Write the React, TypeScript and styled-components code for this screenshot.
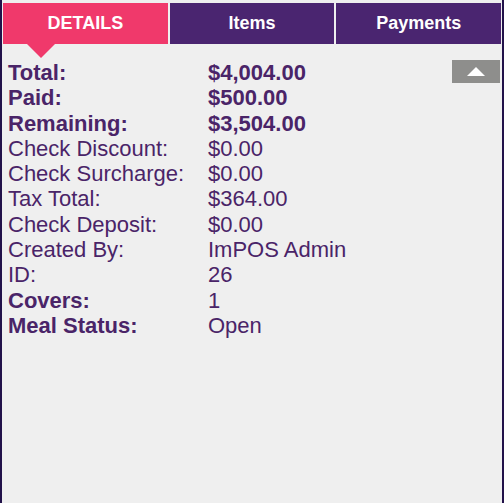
import React from "react";
import styled, { createGlobalStyle } from "styled-components";

const GlobalStyle = createGlobalStyle`
  html, body {
    margin: 0;
    padding: 0;
    background: #efefef;
  }
`;

const Panel = styled.div`
  box-sizing: border-box;
  width: 504px;
  height: 503px;
  background: #efefef;
  border-left: 2px solid #22124a;
  border-right: 2px solid #22124a;
  padding: 3px 1px 0 1px;
  font-family: "Liberation Sans", Arial, sans-serif;
  overflow: hidden;
`;

const Tabs = styled.div`
  display: flex;
  gap: 2px;
  height: 41px;
`;

const Tab = styled.div<{ $active?: boolean }>`
  position: relative;
  flex: 1;
  display: flex;
  align-items: center;
  justify-content: center;
  background: ${(p) => (p.$active ? "#f0396b" : "#4a2570")};
  color: #ffffff;
  font-weight: bold;
  font-size: 18px;
  cursor: pointer;

  ${(p) =>
    p.$active &&
    `
    &::after {
      content: "";
      position: absolute;
      left: 24px;
      top: 100%;
      border-left: 14px solid transparent;
      border-right: 14px solid transparent;
      border-top: 14px solid #f0396b;
    }
  `}
`;

const Body = styled.div`
  position: relative;
  padding: 16px 0 0 5px;
`;

const ScrollUp = styled.button`
  position: absolute;
  top: 16px;
  right: 1px;
  width: 48px;
  height: 23px;
  border: none;
  padding: 0;
  background: #8e8e8c;
  display: flex;
  align-items: center;
  justify-content: center;
  cursor: pointer;
`;

const Grid = styled.div`
  display: grid;
  grid-template-columns: 200px auto;
  color: #4a2468;
  font-size: 22px;
  line-height: 25.3px;
`;

const Cell = styled.div<{ $bold?: boolean }>`
  font-weight: ${(p) => (p.$bold ? "bold" : "normal")};
  white-space: nowrap;
`;

const rows: { label: string; value: string; boldLabel?: boolean; boldValue?: boolean }[] = [
  { label: "Total:", value: "$4,004.00", boldLabel: true, boldValue: true },
  { label: "Paid:", value: "$500.00", boldLabel: true, boldValue: true },
  { label: "Remaining:", value: "$3,504.00", boldLabel: true, boldValue: true },
  { label: "Check Discount:", value: "$0.00" },
  { label: "Check Surcharge:", value: "$0.00" },
  { label: "Tax Total:", value: "$364.00" },
  { label: "Check Deposit:", value: "$0.00" },
  { label: "Created By:", value: "ImPOS Admin" },
  { label: "ID:", value: "26" },
  { label: "Covers:", value: "1", boldLabel: true },
  { label: "Meal Status:", value: "Open", boldLabel: true },
];

export default function App() {
  return (
    <>
      <GlobalStyle />
      <Panel>
        <Tabs>
          <Tab $active>DETAILS</Tab>
          <Tab>Items</Tab>
          <Tab>Payments</Tab>
        </Tabs>
        <Body>
          <ScrollUp aria-label="Scroll up">
            <svg width="18" height="9" viewBox="0 0 18 9">
              <path d="M0 9 L9 0 L18 9 Z" fill="#ffffff" />
            </svg>
          </ScrollUp>
          <Grid>
            {rows.map((r) => (
              <React.Fragment key={r.label}>
                <Cell $bold={r.boldLabel}>{r.label}</Cell>
                <Cell $bold={r.boldValue}>{r.value}</Cell>
              </React.Fragment>
            ))}
          </Grid>
        </Body>
      </Panel>
    </>
  );
}
